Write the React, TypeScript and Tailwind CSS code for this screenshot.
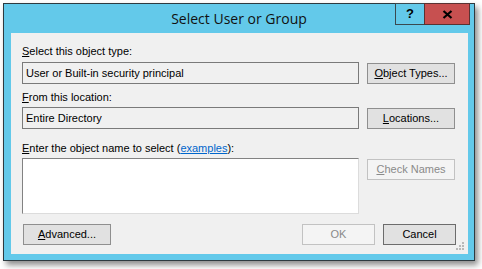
import React from "react";

const u = "underline underline-offset-[1px]";

const Btn = ({
  children,
  disabled,
  strong,
  className = "",
}: {
  children: React.ReactNode;
  disabled?: boolean;
  strong?: boolean;
  className?: string;
}) => (
  <div
    className={`flex h-[21px] items-center justify-center border text-[11px] leading-none ${
      disabled
        ? "border-[#c2c2c2] bg-[#f4f4f4] text-[#8a8a8a]"
        : strong
        ? "border-[#6c6c6c] bg-[#e1e1e1] text-black"
        : "border-[#8f8f8f] bg-[#e1e1e1] text-black"
    } ${className}`}
  >
    {children}
  </div>
);

const Grip = () => (
  <svg width="9" height="9" viewBox="0 0 9 9" className="absolute bottom-[3px] right-[3px]">
    {[
      [6, 0],
      [3, 3],
      [6, 3],
      [0, 6],
      [3, 6],
      [6, 6],
    ].map(([x, y]) => (
      <rect key={`${x}-${y}`} x={x} y={y} width="2" height="2" fill="#b8b8b8" />
    ))}
  </svg>
);

export default function App() {
  return (
    <div
      className="h-[269px] w-[482px] bg-white pl-[3px] pt-[3px]"
      style={{ fontFamily: '"Liberation Sans", Arial, sans-serif' }}
    >
      <div className="relative flex h-[258px] w-[472px] flex-col border border-[#2d3a40] bg-[#63c9ea] shadow-[3px_4px_6px_rgba(0,0,0,0.45)]">
        {/* title bar */}
        <div className="relative flex h-[29px] items-center justify-center">
          <span
            className="mt-[-1px] text-[14px] text-[#111]"
            style={{ fontFamily: '"Open Sans", "Noto Sans", sans-serif' }}
          >
            Select User or Group
          </span>
          <div className="absolute right-[4px] top-[-1px] flex h-[22px]">
            <div className="flex w-[30px] items-center justify-center border border-[#3a4950] text-[13px] font-bold text-black">
              ?
            </div>
            <div className="ml-[-1px] flex w-[46px] items-center justify-center border border-[#5a3232] bg-[#c75050]">
              <svg width="11" height="9" viewBox="0 0 11 9">
                <path d="M1.5 1 L9.5 8 M9.5 1 L1.5 8" stroke="#000" strokeWidth="2.2" />
              </svg>
            </div>
          </div>
        </div>

        {/* client area */}
        <div className="relative ml-[7px] mr-[6px] h-[221px] bg-[#f0f0f0] pl-[11px] pr-[12px] pt-[12px] text-[11px] leading-[13px] text-black">
          <div>
            <span className={u}>S</span>elect this object type:
          </div>
          <div className="mt-[4px] flex items-start gap-[8px]">
            <div className="flex h-[22px] w-[337px] items-center border border-[#7a7a7a] pl-[3px]">
              User or Built-in security principal
            </div>
            <Btn className="mt-[1px] w-[88px]">
              <span className={u}>O</span>bject Types...
            </Btn>
          </div>

          <div className="mt-[7px]">
            <span className={u}>F</span>rom this location:
          </div>
          <div className="mt-[3px] flex items-start gap-[8px]">
            <div className="flex h-[22px] w-[337px] items-center border border-[#7a7a7a] pl-[3px]">
              Entire Directory
            </div>
            <Btn className="mt-[1px] w-[88px]">
              <span className={u}>L</span>ocations...
            </Btn>
          </div>

          <div className="mt-[13px]">
            <span className={u}>E</span>nter the object name to select (
            <span className="text-[#0066cc] underline underline-offset-[1px]">examples</span>):
          </div>
          <div className="mt-[3px] flex items-start gap-[8px]">
            <div className="h-[56px] w-[337px] border border-b-[#dcdcdc] border-l-[#828282] border-r-[#dcdcdc] border-t-[#828282] bg-white" />
            <Btn disabled className="mt-[1px] w-[88px]">
              <span className={u}>C</span>heck Names
            </Btn>
          </div>

          <div className="mt-[10px] flex items-center">
            <Btn className="ml-[1px] w-[88px]">
              <span className={u}>A</span>dvanced...
            </Btn>
            <div className="flex-1" />
            <Btn disabled className="w-[73px]">
              OK
            </Btn>
            <Btn strong className="ml-[8px] w-[73px]">
              Cancel
            </Btn>
          </div>
          <Grip />
        </div>
      </div>
    </div>
  );
}
